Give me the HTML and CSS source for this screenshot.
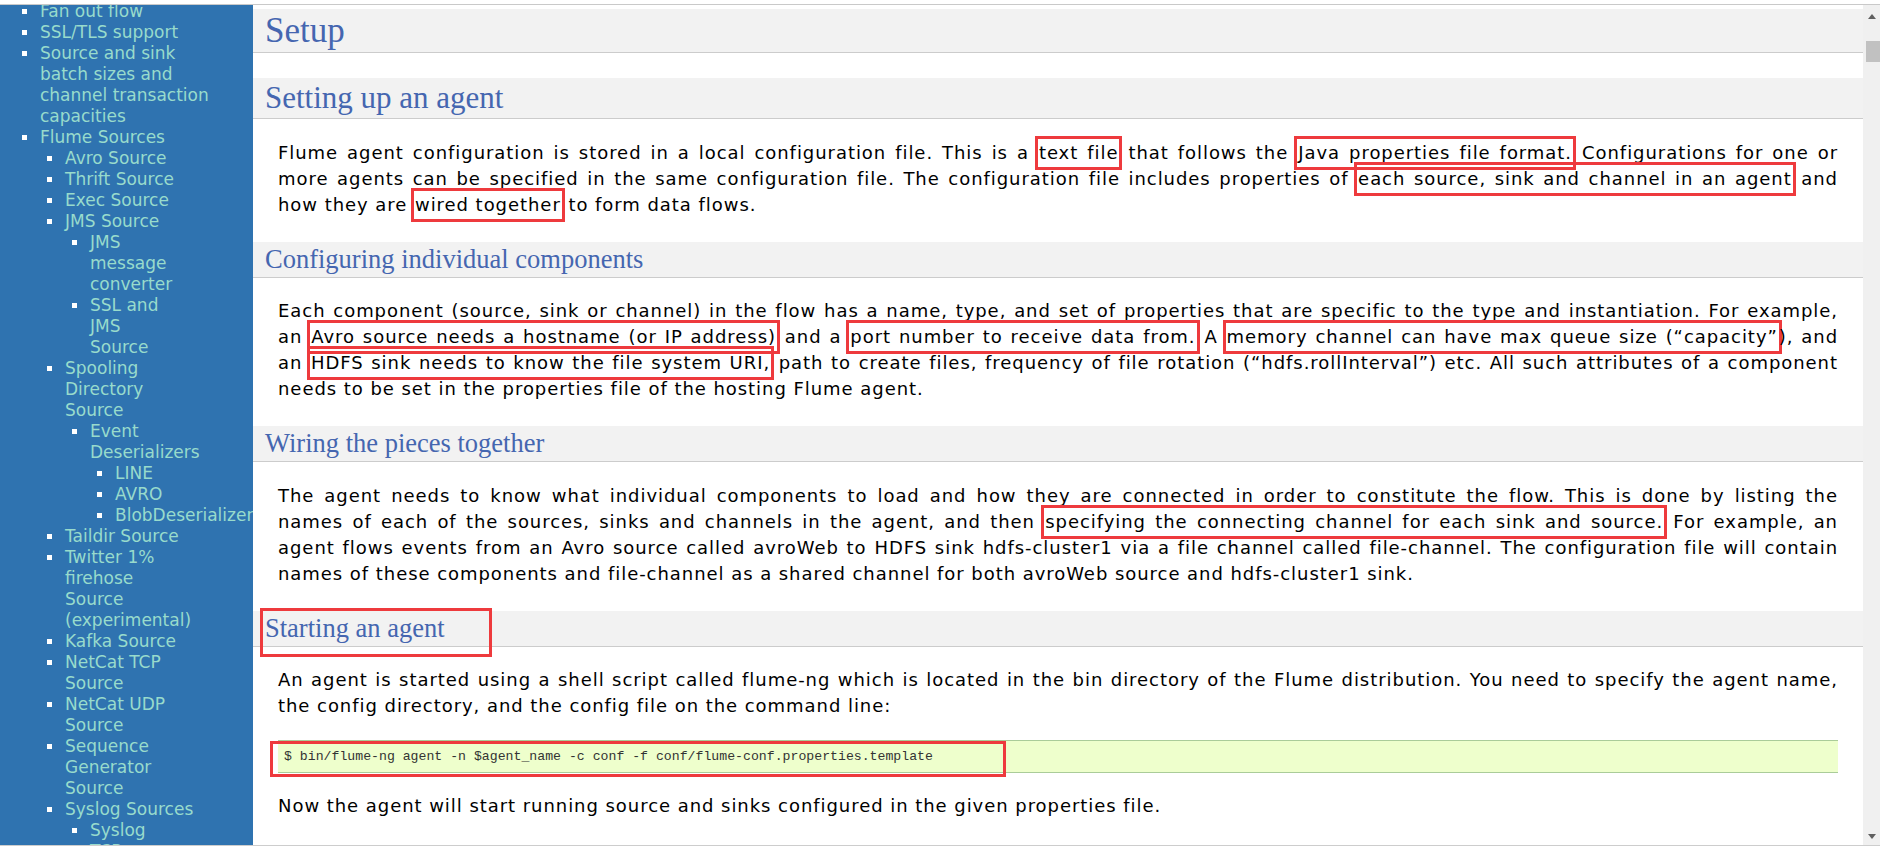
FILE: index.html
```html
<!DOCTYPE html>
<html lang="en">
<head>
<meta charset="utf-8">
<title>Flume User Guide - Setup</title>
<link rel="stylesheet" href="styles.css">
</head>
<body>
<div class="frame">
  <nav class="sidebar">
    <ul class="toc">
      <li><a href="#">Fan out flow</a></li>
      <li><a href="#">SSL/TLS support</a></li>
      <li><a href="#">Source and sink batch sizes and channel transaction capacities</a></li>
      <li><a href="#">Flume Sources</a>
        <ul class="lv2">
          <li><a href="#">Avro Source</a></li>
          <li><a href="#">Thrift Source</a></li>
          <li><a href="#">Exec Source</a></li>
          <li><a href="#">JMS Source</a>
            <ul class="lv3">
              <li><a href="#">JMS message converter</a></li>
              <li><a href="#">SSL and JMS Source</a></li>
            </ul>
          </li>
          <li><a href="#">Spooling Directory Source</a>
            <ul class="lv3">
              <li><a href="#">Event Deserializers</a>
                <ul class="lv4">
                  <li><a href="#">LINE</a></li>
                  <li><a href="#">AVRO</a></li>
                  <li><a href="#">BlobDeserializer</a></li>
                </ul>
              </li>
            </ul>
          </li>
          <li><a href="#">Taildir Source</a></li>
          <li><a href="#">Twitter 1% firehose Source (experimental)</a></li>
          <li><a href="#">Kafka Source</a></li>
          <li><a href="#">NetCat TCP Source</a></li>
          <li><a href="#">NetCat UDP Source</a></li>
          <li><a href="#">Sequence Generator Source</a></li>
          <li><a href="#">Syslog Sources</a>
            <ul class="lv3">
              <li><a href="#">Syslog TCP Source</a></li>
              <li><a href="#">Multiport Syslog TCP Source</a></li>
              <li><a href="#">Syslog UDP Source</a></li>
            </ul>
          </li>
        </ul>
      </li>
    </ul>
  </nav>

  <main class="content">
    <h1>Setup</h1>
    <h2>Setting up an agent</h2>
    <p class="para">
      <span class="ln">Flume agent configuration is stored in a local configuration file. This is a <span class="mark">text file</span> that follows the <span class="mark">Java properties file format.</span> Configurations for one or</span>
      <span class="ln">more agents can be specified in the same configuration file. The configuration file includes properties of <span class="mark">each source, sink and channel in an agent</span> and</span>
      <span class="ln last">how they are <span class="mark">wired together</span> to form data flows.</span>
    </p>

    <h3>Configuring individual components</h3>
    <p class="para">
      <span class="ln">Each component (source, sink or channel) in the flow has a name, type, and set of properties that are specific to the type and instantiation. For example,</span>
      <span class="ln">an <span class="mark">Avro source needs a hostname (or IP address)</span> and a <span class="mark">port number to receive data from.</span> A <span class="mark">memory channel can have max queue size (“capacity”</span>), and</span>
      <span class="ln">an <span class="mark">HDFS sink needs to know the file system URI,</span> path to create files, frequency of file rotation (“hdfs.rollInterval”) etc. All such attributes of a component</span>
      <span class="ln last">needs to be set in the properties file of the hosting Flume agent.</span>
    </p>

    <h3>Wiring the pieces together</h3>
    <p class="para">
      <span class="ln">The agent needs to know what individual components to load and how they are connected in order to constitute the flow. This is done by listing the</span>
      <span class="ln">names of each of the sources, sinks and channels in the agent, and then <span class="mark">specifying the connecting channel for each sink and source.</span> For example, an</span>
      <span class="ln">agent flows events from an Avro source called avroWeb to HDFS sink hdfs-cluster1 via a file channel called file-channel. The configuration file will contain</span>
      <span class="ln last">names of these components and file-channel as a shared channel for both avroWeb source and hdfs-cluster1 sink.</span>
    </p>

    <h3 class="boxed">Starting an agent<span class="mark-box mark-box-heading"></span></h3>
    <p class="para">
      <span class="ln">An agent is started using a shell script called flume-ng which is located in the bin directory of the Flume distribution. You need to specify the agent name,</span>
      <span class="ln last">the config directory, and the config file on the command line:</span>
    </p>

    <pre class="code">$ bin/flume-ng agent -n $agent_name -c conf -f conf/flume-conf.properties.template<span class="mark-box mark-box-code"></span></pre>

    <p class="para">
      <span class="ln last">Now the agent will start running source and sinks configured in the given properties file.</span>
    </p>
  </main>

  <div class="scrollbar">
    <span class="arrow arrow-up"></span>
    <span class="thumb"></span>
    <span class="arrow arrow-down"></span>
  </div>
</div>
</body>
</html>
```

FILE: styles.css
```css
html, body {
  margin: 0;
  padding: 0;
  height: 850px;
  overflow: hidden;
  background: #ffffff;
}

.frame {
  margin-top: 4px;
  height: 840px;
  border-top: 1px solid #c9c9c9;
  border-bottom: 1px solid #cdcdcd;
  display: flex;
}

/* ---------- sidebar ---------- */
.sidebar {
  width: 253px;
  flex: none;
  background: #2f73b0;
  overflow: hidden;
  font-family: "DejaVu Sans", Verdana, sans-serif;
  font-size: 17px;
  line-height: 21px;
}

.toc {
  list-style: none;
  margin: -4px 33px 0 40px;
  padding: 0;
}

.toc ul {
  list-style: none;
  margin: 0 0 0 25px;
  padding: 0;
}

.toc .lv2 {
  margin-right: 24px;
}

.toc .lv3 {
  margin-right: 18px;
}

.toc .lv4 {
  margin-right: 0;
  white-space: nowrap;
}

.toc li {
  position: relative;
}

.toc li::before {
  content: "";
  position: absolute;
  left: -18px;
  top: 8px;
  width: 5px;
  height: 5px;
  background: #ffffff;
}

.toc a {
  color: #98dbcc;
  text-decoration: none;
}

/* ---------- content ---------- */
.content {
  flex: 1;
  min-width: 0;
  overflow: hidden;
  padding-top: 4px;
}

.content h1,
.content h2,
.content h3 {
  font-family: "Liberation Serif", "Times New Roman", serif;
  font-weight: normal;
  color: #4566b0;
  background: #f2f2f2;
  border-bottom: 1px solid #cccccc;
  margin: 24px 0 20px;
  padding: 0 0 0 12px;
}

.content h1 {
  font-size: 35px;
  line-height: 43px;
  margin-top: 0;
  margin-bottom: 25px;
}

.content h2 {
  font-size: 31px;
  line-height: 40px;
}

.content h3 {
  font-size: 26.5px;
  line-height: 35px;
}

.para {
  margin: 20.5px 25px;
  font-family: "DejaVu Sans", Verdana, sans-serif;
  font-size: 18px;
  line-height: 26px;
  letter-spacing: 0.95px;
  color: #000000;
}

.ln {
  display: block;
  white-space: nowrap;
  text-align: justify;
  text-align-last: justify;
}

.ln.last {
  text-align-last: left;
}

.code {
  position: relative;
  margin: 20px 25px;
  padding: 7px 6px;
  background: #eeffcc;
  border-top: 1px solid #aacc99;
  border-bottom: 1px solid #aacc99;
  font-family: "Liberation Mono", "Courier New", monospace;
  font-size: 13.2px;
  line-height: 17px;
  color: #333333;
  white-space: pre;
}

/* ---------- red annotation marks ---------- */
.mark {
  border: 3px solid #ee3a3d;
  padding: 3px 1px 4px;
  margin: 0 -3px;
}

.boxed {
  position: relative;
}

.mark-box {
  position: absolute;
  box-sizing: border-box;
  border: 3px solid #ee3a3d;
}

.mark-box-heading {
  left: 7px;
  top: -3px;
  width: 232px;
  height: 49px;
}

.mark-box-code {
  left: -8px;
  top: 0;
  width: 736px;
  height: 36px;
}

/* ---------- scrollbar ---------- */
.scrollbar {
  width: 17px;
  flex: none;
  background: #f0f0f0;
  display: flex;
  flex-direction: column;
  align-items: center;
}

.arrow {
  width: 0;
  height: 0;
  border-left: 4.5px solid transparent;
  border-right: 4.5px solid transparent;
}

.arrow-up {
  margin-top: 9px;
  border-bottom: 5px solid #606060;
}

.arrow-down {
  margin-top: auto;
  margin-bottom: 6px;
  border-top: 5px solid #606060;
}

.thumb {
  align-self: flex-end;
  width: 14px;
  height: 21px;
  margin-top: 22px;
  background: #c1c1c1;
}
```
